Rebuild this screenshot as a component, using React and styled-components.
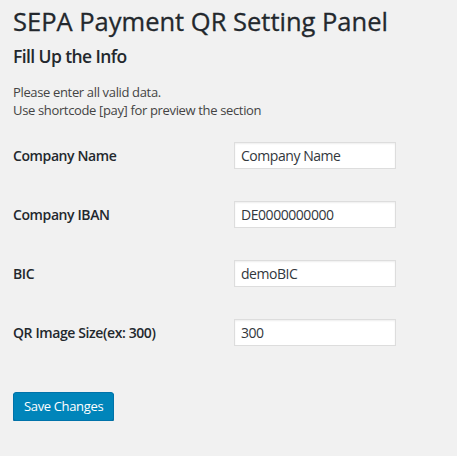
import React from "react";
import styled, { createGlobalStyle } from "styled-components";

const GlobalStyle = createGlobalStyle`
  html, body {
    margin: 0;
    padding: 0;
    background: #f1f1f1;
  }
  body {
    font-family: "Open Sans", "Noto Sans", sans-serif;
    color: #23282d;
  }
`;

const Wrap = styled.div`
  padding: 6px 0 0 13px;
`;

const Title = styled.h1`
  margin: 0;
  font-size: 25.5px;
  line-height: 30px;
  font-weight: 400;
  -webkit-text-stroke: 0.3px #23282d;
  color: #23282d;
`;

const SubTitle = styled.h2`
  margin: 8px 0 0;
  font-size: 17.5px;
  line-height: 24px;
  font-weight: 600;
  letter-spacing: -0.6px;
`;

const Intro = styled.div`
  margin-top: 15px;
  font-size: 13px;
  line-height: 18px;
  letter-spacing: -0.35px;
  color: #444;
`;

const Form = styled.form`
  display: flex;
  flex-direction: column;
  gap: 32px;
  margin-top: 23px;
`;

const Row = styled.div`
  display: flex;
  align-items: center;
`;

const Label = styled.label`
  width: 221px;
  font-size: 14px;
  line-height: 20px;
  font-weight: 600;
  letter-spacing: -0.4px;
  color: #23282d;
`;

const Input = styled.input`
  box-sizing: border-box;
  width: 162px;
  height: 27px;
  margin: 0;
  padding: 0 6px;
  border: 1px solid #ddd;
  box-shadow: inset 0 1px 2px rgba(0, 0, 0, 0.07);
  background: #fff;
  font-family: inherit;
  font-size: 14px;
  letter-spacing: -0.45px;
  color: #32373c;
  outline: none;
`;

const Actions = styled.div`
  margin-top: 46px;
`;

const Button = styled.button`
  box-sizing: border-box;
  height: 29px;
  padding: 0 10px;
  border: 1px solid #0073aa;
  border-radius: 3px;
  background: #0085ba;
  box-shadow: 0 1px 0 #006799;
  color: #fff;
  font-family: inherit;
  font-size: 13px;
  line-height: 27px;
  letter-spacing: -0.35px;
  cursor: pointer;
`;

const fields = [
  { label: "Company Name", value: "Company Name" },
  { label: "Company IBAN", value: "DE0000000000" },
  { label: "BIC", value: "demoBIC" },
  { label: "QR Image Size(ex: 300)", value: "300" },
];

const App = () => {
  return (
    <>
      <GlobalStyle />
      <Wrap>
        <Title>SEPA Payment QR Setting Panel</Title>
        <SubTitle>Fill Up the Info</SubTitle>
        <Intro>
          Please enter all valid data.
          <br />
          Use shortcode [pay] for preview the section
        </Intro>
        <Form onSubmit={(e) => e.preventDefault()}>
          {fields.map((f) => (
            <Row key={f.label}>
              <Label>{f.label}</Label>
              <Input type="text" defaultValue={f.value} />
            </Row>
          ))}
        </Form>
        <Actions>
          <Button type="button">Save Changes</Button>
        </Actions>
      </Wrap>
    </>
  );
};

export default App;
